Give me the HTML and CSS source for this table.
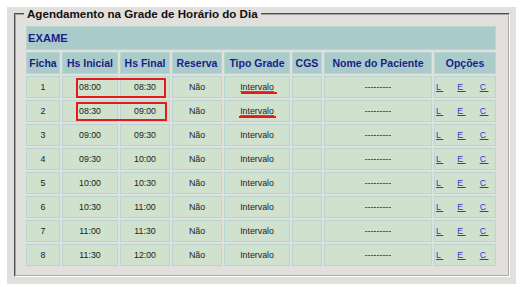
FILE: index.html
```html
<!DOCTYPE html>
<html lang="pt-BR">
<head>
  <meta charset="UTF-8">
  <title>Agendamento na Grade de Horário do Dia</title>
  <link rel="stylesheet" href="styles.css">
</head>
<body>
  <div class="panel">
    <fieldset class="box">
      <legend>Agendamento na Grade de Horário do Dia</legend>
      <div class="grid-wrap">
        <table class="grade">
          <tr>
            <th colspan="8" class="titulo">EXAME</th>
          </tr>
          <tr>
            <th class="c-ficha">Ficha</th>
            <th class="c-ini">Hs Inicial</th>
            <th class="c-fim">Hs Final</th>
            <th class="c-res">Reserva</th>
            <th class="c-tipo">Tipo Grade</th>
            <th class="c-cgs">CGS</th>
            <th class="c-nome">Nome do Paciente</th>
            <th class="c-op">Opções</th>
          </tr>
          <tbody id="linhas"></tbody>
        </table>
        <!-- marcações em vermelho -->
        <span class="mark-box box1"></span>
        <span class="mark-box box2"></span>
        <span class="mark-line line1"></span>
        <span class="mark-line line2"></span>
      </div>
    </fieldset>
  </div>

  <script>
    const horarios = ['08:00', '08:30', '09:00', '09:30', '10:00', '10:30', '11:00', '11:30', '12:00'];
    const tbody = document.getElementById('linhas');

    for (let i = 0; i < 8; i++) {
      const tipo = i < 2 ? '<span class="sub">Intervalo</span>' : 'Intervalo';
      tbody.innerHTML += `
        <tr>
          <td>${i + 1}</td>
          <td>${horarios[i]}</td>
          <td>${horarios[i + 1]}</td>
          <td>Não</td>
          <td>${tipo}</td>
          <td></td>
          <td>---------</td>
          <td class="ops"><a href="#">L&nbsp;</a><a href="#">E&nbsp;</a><a href="#">C&nbsp;</a></td>
        </tr>
      `;
    }
  </script>
</body>
</html>
```

FILE: styles.css
```css
body {
  margin: 0;
  background-color: #fff;
  font-family: 'Liberation Sans', Arial, sans-serif;
}

.panel {
  margin: 7px 7px 3px 7px;
  height: 277px;
  box-sizing: border-box;
  padding: 0 6px 6px 7px;
  background-color: #e1e0dd;
}

.box {
  margin: 0;
  padding: 4px 9px 7px 8px;
  border: 2px groove #d8d8d8;
  border-color: #a3a3a3 #fff #fff #a3a3a3;
  border-style: groove;
}

legend {
  padding: 0 3px;
  font-size: 11.6px;
  font-weight: bold;
  color: #111;
}

.grid-wrap {
  position: relative;
}

.grade {
  border-collapse: separate;
  border-spacing: 2px;
}

.grade th,
.grade td {
  box-sizing: border-box;
  padding: 0;
  height: 22px;
  text-align: center;
  vertical-align: middle;
  border: 1px solid #b7d5d1;
  white-space: nowrap;
}

.grade th {
  background-color: #a9cccb;
  color: #1c1c88;
  font-size: 10.5px;
  font-weight: bold;
}

.grade th.titulo {
  height: 24px;
  text-align: left;
  padding-left: 1px;
  font-size: 11.2px;
}

.grade td {
  background-color: #d0e1cd;
  color: #222;
  font-size: 8.8px;
}

.c-ficha { width: 34px; }
.c-ini { width: 56px; }
.c-fim { width: 50px; }
.c-res { width: 50px; }
.c-tipo { width: 66px; }
.c-cgs { width: 30px; }
.c-nome { width: 108px; }
.c-op { width: 62px; }

.sub {
  text-decoration: underline;
  text-decoration-color: #666;
}

.grade td.ops {
  text-align: left;
  padding-left: 1px;
}

.ops a {
  color: #3535d0;
}

.ops a + a {
  margin-left: 14px;
}

.mark-box {
  position: absolute;
  left: 52px;
  width: 90px;
  box-sizing: border-box;
  border: 2px solid #e41b1b;
}

.box1 { top: 54px; height: 20px; }
.box2 { top: 78px; height: 19px; width: 91px; }

.mark-line {
  position: absolute;
  height: 2px;
  background-color: #e41b1b;
}

.line1 { left: 217px; top: 68px; width: 36px; }
.line2 { left: 215px; top: 92px; width: 37px; }
```
